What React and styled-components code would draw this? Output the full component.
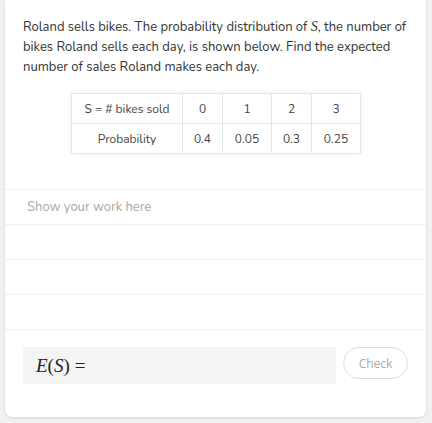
import React from "react";
import styled, { createGlobalStyle } from "styled-components";

const Global = createGlobalStyle`
  html, body { margin: 0; padding: 0; background: #f1f1f1; }
  body { font-family: Nunito, Lato, "Noto Sans", sans-serif; }
  * { box-sizing: border-box; }
`;

const Page = styled.div`
  padding: 0 6px 7px 5px;
`;

const Card = styled.div`
  background: #fff;
  border-radius: 0 0 7px 7px;
  box-shadow: 0 1px 3px rgba(0,0,0,0.12);
  display: flex;
  flex-direction: column;
`;

const Question = styled.p`
  margin: 0;
  padding: 17px 14px 0 18px;
  font-size: 13px;
  line-height: 20px;
  color: #333;
`;

const MathVar = styled.span`
  font-family: "Liberation Serif", serif;
  font-style: italic;
  font-size: 14px;
`;

const TableWrap = styled.div`
  display: flex;
  justify-content: center;
  padding: 16px 0 35px 1px;
`;

const Table = styled.table`
  border-collapse: collapse;
  table-layout: fixed;
  width: 289px;
  box-shadow: 0 0 4px rgba(0,0,0,0.08);
  font-size: 12px;
  color: #444;
`;

const Cell = styled.td`
  border: 1px solid #e6e6e6;
  height: 30px;
  padding: 0;
  text-align: center;
`;

const WorkArea = styled.div`
  display: flex;
  flex-direction: column;
  border-top: 1px solid #f0f0f0;
`;

const WorkRow = styled.div`
  height: 35px;
  border-bottom: 1px solid #f0f0f0;
  display: flex;
  align-items: center;
  padding-left: 22px;
  font-size: 13px;
  color: #a8a8a8;
`;

const AnswerRow = styled.div`
  display: flex;
  align-items: flex-start;
  gap: 7px;
  padding: 17px 18px 33px 18px;
`;

const AnswerInput = styled.div`
  flex: 1;
  height: 37px;
  background: #f4f4f4;
  display: flex;
  align-items: center;
  padding-left: 13px;
  font-family: "Liberation Serif", serif;
  font-size: 19px;
  color: #222;
`;

const I = styled.i`
  font-style: italic;
  font-family: "Liberation Serif", serif;
`;

const Eq = styled.span`
  margin-left: 5px;
`;

const CheckButton = styled.button`
  width: 65px;
  height: 32px;
  border: 1px solid #dedede;
  border-radius: 16px;
  background: #fff;
  color: #aaa;
  font-family: "Open Sans", sans-serif;
  font-size: 12px;
  padding: 0;
`;

const cols = [111, 40, 49, 40, 49];

export default function App() {
  return (
    <>
      <Global />
      <Page>
        <Card>
          <Question>
            Roland sells bikes. The probability distribution of <MathVar>S</MathVar>, the number of bikes Roland sells each day, is shown below. Find the expected number of sales Roland makes each day.
          </Question>
          <TableWrap>
            <Table>
              <colgroup>
                {cols.map((w, i) => <col key={i} style={{ width: w }} />)}
              </colgroup>
              <tbody>
                <tr>
                  {["S = # bikes sold", "0", "1", "2", "3"].map((t, i) => (
                    <Cell key={i}>{t}</Cell>
                  ))}
                </tr>
                <tr>
                  {["Probability", "0.4", "0.05", "0.3", "0.25"].map((t, i) => (
                    <Cell key={i}>{t}</Cell>
                  ))}
                </tr>
              </tbody>
            </Table>
          </TableWrap>
          <WorkArea>
            <WorkRow>Show your work here</WorkRow>
            <WorkRow />
            <WorkRow />
            <WorkRow />
          </WorkArea>
          <AnswerRow>
            <AnswerInput>
              <I>E</I>(<I>S</I>)<Eq>=</Eq>
            </AnswerInput>
            <CheckButton>Check</CheckButton>
          </AnswerRow>
        </Card>
      </Page>
    </>
  );
}
